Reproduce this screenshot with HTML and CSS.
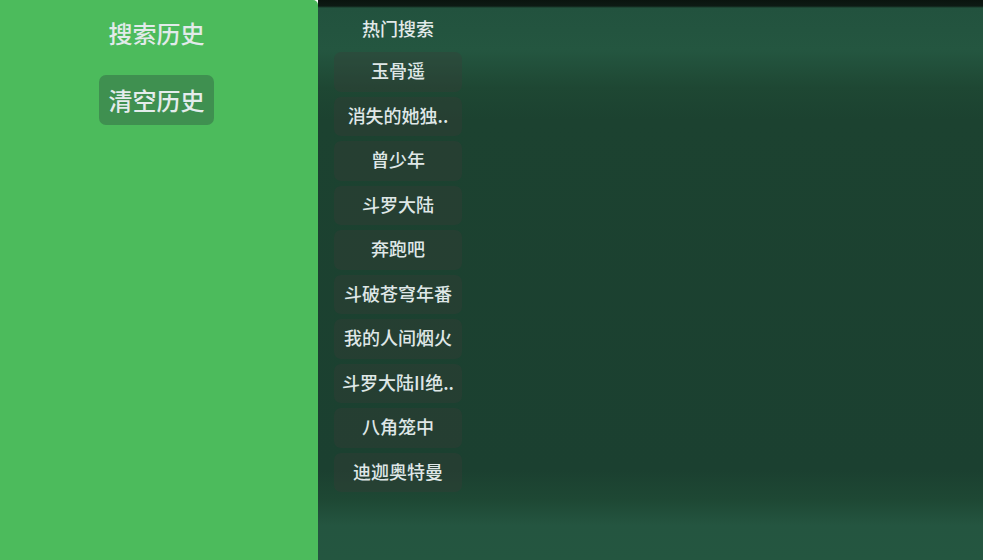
FILE: index.html
```
<html>
<head>
  <meta charset="utf-8">
  <link rel="stylesheet" href="styles.css">
</head>
<body>
<div class="page">
  <div class="history">
    <div class="history-title">搜索历史</div>
    <button class="clear-btn">清空历史</button>
  </div>
  <div class="main">
    <div class="hot">
      <div class="hot-title">热门搜索</div>
      <button class="hot-item">玉骨遥</button>
      <button class="hot-item">消失的她独..</button>
      <button class="hot-item">曾少年</button>
      <button class="hot-item">斗罗大陆</button>
      <button class="hot-item">奔跑吧</button>
      <button class="hot-item">斗破苍穹年番</button>
      <button class="hot-item">我的人间烟火</button>
      <button class="hot-item">斗罗大陆II绝..</button>
      <button class="hot-item">八角笼中</button>
      <button class="hot-item">迪迦奥特曼</button>
    </div>
  </div>
</div>
</body>
</html>
```

FILE: styles.css
```
body {
  margin: 0;
  font-family: "Noto Sans CJK SC", "Noto Sans", sans-serif;
  font-weight: 500;
  color: #e2eaea;
}
.page {
  display: flex;
  width: 983px;
  height: 560px;
  overflow: hidden;
}
.history {
  width: 318px;
  padding-right: 5px;
  box-sizing: border-box;
  flex: none;
  background: #4cbb5c;
  border-top-right-radius: 5px;
  display: flex;
  flex-direction: column;
  align-items: center;
}
.history-title {
  font-size: 24px;
  line-height: 34px;
  margin-top: 16px;
}
.clear-btn {
  margin-top: 25px;
  width: 115px;
  height: 50px;
  border: none;
  border-radius: 7px;
  background: #3f9050;
  color: #e4ecec;
  font-family: inherit;
  font-weight: 500;
  font-size: 24px;
  padding: 0 0 2px;
}
.main {
  flex: 1;
  padding-left: 16px;
  background: linear-gradient(to bottom,
    #0a140f 0, #0d1a14 6px, #22523e 8px, #245640 50px,
    #1e4733 88px, #1c4230 120px, #1b4030 470px,
    #1e4834 500px, #245540 525px, #245640 100%);
}
.hot {
  width: 128px;
  display: flex;
  flex-direction: column;
  gap: 5px;
}
.hot-title {
  text-align: center;
  font-size: 18px;
  line-height: 26px;
  margin-top: 15px;
  margin-bottom: 6px;
}
.hot-item {
  height: 39.5px;
  border: none;
  border-radius: 7px;
  background: rgba(60, 60, 55, 0.32);
  color: #dfe7e7;
  font-family: inherit;
  font-weight: 500;
  font-size: 18px;
  padding: 0 0 3px;
  white-space: nowrap;
}
```
